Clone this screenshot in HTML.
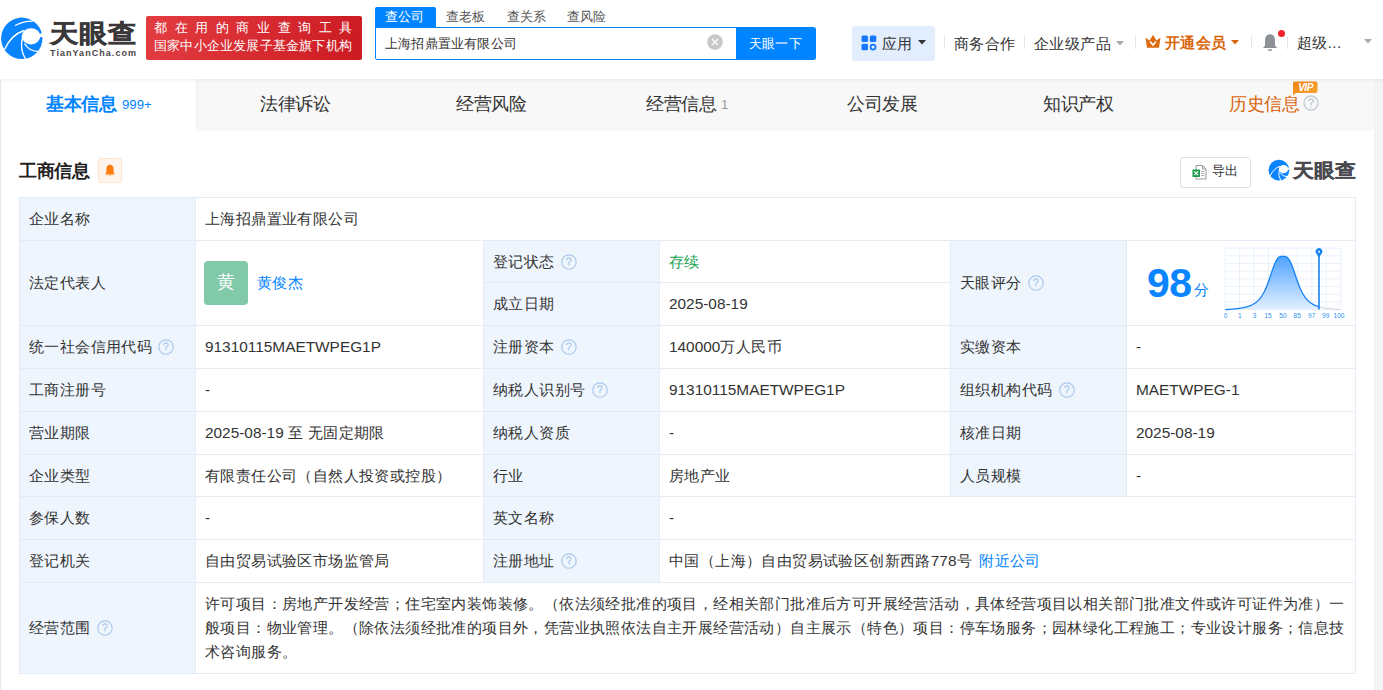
<!DOCTYPE html>
<html><head><meta charset="utf-8">
<style>
*{box-sizing:border-box;margin:0;padding:0}
html,body{width:1383px;height:690px;overflow:hidden}
body{background:#f4f4f4;font-family:"Liberation Sans",sans-serif;color:#333;position:relative}
.a{position:absolute;white-space:nowrap}
#hdr{position:absolute;left:0;top:0;width:1383px;height:79px;background:#fff;box-shadow:0 1px 4px rgba(0,0,0,0.07);z-index:5}
#wrap{position:absolute;left:1px;top:79px;width:1373px;height:611px;background:#fff}
#lstrip{position:absolute;left:0;top:79px;width:1px;height:611px;background:#e8e8e8}
.tabbar{position:absolute;left:0;top:0;width:1373px;height:52px;background:#f8f8f8}
.tab{position:absolute;top:-1px;height:52px;line-height:52px;font-size:17.6px;color:#333;text-align:center}
.cn{letter-spacing:0.4px}
.hl{position:absolute;height:1px;background:#e3ecf5}
.vl{position:absolute;width:1px;background:#e3ecf5}
.lb{position:absolute;background:#eef5fd}
.t{position:absolute;white-space:nowrap;font-size:15.4px;color:#333}
.q{display:inline-block;width:16px;height:16px;vertical-align:middle;margin-left:2px;position:relative;top:-1px}
</style></head><body>
<div id="hdr">
  <svg class="a" style="left:0;top:14px" width="48" height="48" viewBox="0 0 48 48">
    <circle cx="21.8" cy="24.3" r="20.7" fill="#0a84ff"/>
    <ellipse cx="31" cy="22.3" rx="9.3" ry="8.1" fill="#fff"/>
    <path d="M31 22 L45 18.5 L45 23.5 Z" fill="#fff"/>
    <path d="M37.5 20.5 Q38.5 12 30 10.5 Q23 9.5 17 13.5" fill="none" stroke="#0a84ff" stroke-width="0"/>
    <path d="M4.5 35.5 Q11 21 24 16.5" fill="none" stroke="#fff" stroke-width="1.4"/>
    <path d="M22.5 24 Q19.5 35 25.5 45" fill="none" stroke="#fff" stroke-width="1.4"/>
    <path d="M24.5 29.5 Q29 37.5 39 37.5" fill="none" stroke="#fff" stroke-width="1.4"/>
    <path d="M15 11.5 Q24 7 33 7.2" fill="none" stroke="#fff" stroke-width="1.2"/>
  </svg>
  <div class="a" style="left:49.5px;top:17px;font-size:25px;line-height:32px;font-weight:bold;color:#3b3839;letter-spacing:0.6px;transform:scaleX(1.13);transform-origin:0 0;-webkit-text-stroke:0.5px #3b3839">天眼查</div>
  <div class="a" style="left:50px;top:47px;font-size:9px;line-height:12px;font-weight:bold;color:#4a4647;letter-spacing:1.05px">TianYanCha.com</div>
  <div class="a" style="left:146px;top:16px;width:216px;height:44px;border-radius:2px;background:linear-gradient(100deg,#e23c41,#cc1b22)"></div>
  <div class="a" style="left:154px;top:18px;font-size:13px;line-height:20px;color:#fff;letter-spacing:7.6px">都在用的商业查询工具</div>
  <div class="a" style="left:154px;top:36px;font-size:13px;line-height:20px;color:#fff;letter-spacing:0.2px">国家中小企业发展子基金旗下机构</div>

  <div class="a" style="left:375px;top:7px;width:61px;height:21px;background:#0084ff;border-radius:2px 2px 0 0"></div>
  <div class="a" style="left:385px;top:6px;font-size:13px;line-height:21px;color:#fff;letter-spacing:0.2px">查公司</div>
  <div class="a" style="left:446px;top:6px;font-size:13px;line-height:21px;color:#555;letter-spacing:0.2px">查老板</div>
  <div class="a" style="left:507px;top:6px;font-size:13px;line-height:21px;color:#555;letter-spacing:0.2px">查关系</div>
  <div class="a" style="left:567px;top:6px;font-size:13px;line-height:21px;color:#555;letter-spacing:0.2px">查风险</div>
  <div class="a" style="left:375px;top:27px;width:441px;height:33px;border:1px solid #0084ff;border-radius:0 2px 2px 2px;background:#fff"></div>
  <div class="a" style="left:385px;top:27px;font-size:13px;line-height:33px;color:#333;letter-spacing:0.2px">上海招鼎置业有限公司</div>
  <svg class="a" style="left:707px;top:34px" width="16" height="16" viewBox="0 0 16 16"><circle cx="8" cy="8" r="7.8" fill="#c8c8c8"/><path d="M5 5L11 11M11 5L5 11" stroke="#fff" stroke-width="1.3"/></svg>
  <div class="a" style="left:736px;top:27px;width:79px;height:33px;background:#0084ff;border-radius:0 3px 3px 0"></div>
  <div class="a" style="left:749px;top:27px;font-size:13px;line-height:33px;color:#fff;letter-spacing:0.2px">天眼一下</div>

  <div class="a" style="left:852px;top:26px;width:83px;height:35px;background:#e2eefe;border-radius:3px"></div>
  <svg class="a" style="left:861px;top:35px" width="16" height="16" viewBox="0 0 16 16">
    <rect x="0.5" y="0.5" width="6.5" height="6.5" rx="1.5" fill="#1677ff"/>
    <rect x="8.8" y="0.5" width="6.5" height="6.5" rx="1.5" fill="#1677ff"/>
    <rect x="0.5" y="8.8" width="6.5" height="6.5" rx="1.5" fill="#1677ff"/>
    <circle cx="12.05" cy="12.05" r="2.5" fill="none" stroke="#1677ff" stroke-width="1.8"/>
  </svg>
  <div class="a" style="left:882px;top:26px;font-size:15px;line-height:35px;color:#333;letter-spacing:0.4px">应用</div>
  <svg class="a" style="left:918px;top:40px" width="8" height="5" viewBox="0 0 8 5"><path d="M0 0H8L4 4.5Z" fill="#333"/></svg>
  <div class="a" style="left:944px;top:36px;width:1px;height:13px;background:#e6e6e6"></div>
  <div class="a" style="left:954px;top:26px;font-size:15px;line-height:35px;color:#333;letter-spacing:0.4px">商务合作</div>
  <div class="a" style="left:1024px;top:36px;width:1px;height:13px;background:#e6e6e6"></div>
  <div class="a" style="left:1034px;top:26px;font-size:15px;line-height:35px;color:#333;letter-spacing:0.4px">企业级产品</div>
  <svg class="a" style="left:1116px;top:41px" width="8" height="5" viewBox="0 0 8 5"><path d="M0 0H8L4 4.5Z" fill="#aaa"/></svg>
  <div class="a" style="left:1135px;top:36px;width:1px;height:13px;background:#e6e6e6"></div>
  <svg class="a" style="left:1145px;top:34px" width="16" height="15" viewBox="0 0 16 15">
    <path d="M0.5 3.5 L4.5 6.5 L8 0.8 L11.5 6.5 L15.5 3.5 L14 13.8 H2 Z" fill="#dc6a0f"/>
    <path d="M5 7.5 L8 11 L11 7.5" fill="none" stroke="#fff" stroke-width="1.6"/>
  </svg>
  <div class="a" style="left:1165px;top:25px;font-size:15px;line-height:35px;color:#d9650b;font-weight:bold;letter-spacing:0.4px">开通会员</div>
  <svg class="a" style="left:1231px;top:40px" width="8" height="5" viewBox="0 0 8 5"><path d="M0 0H8L4 4.5Z" fill="#d9650b"/></svg>
  <div class="a" style="left:1251px;top:36px;width:1px;height:13px;background:#e6e6e6"></div>
  <svg class="a" style="left:1262px;top:33px" width="16" height="19" viewBox="0 0 16 19">
    <path d="M8 1.2 C4.2 1.2 3 4.5 3 8 V12.5 L1 15 H15 L13 12.5 V8 C13 4.5 11.8 1.2 8 1.2Z" fill="#8e9196"/>
    <path d="M6 17 H10" stroke="#8e9196" stroke-width="1.4"/>
  </svg>
  <div class="a" style="left:1278px;top:30px;width:7px;height:7px;border-radius:50%;background:#f5222d"></div>
  <div class="a" style="left:1287px;top:36px;width:1px;height:13px;background:#e6e6e6"></div>
  <div class="a" style="left:1297px;top:24.5px;font-size:15px;line-height:35px;color:#333;letter-spacing:0.4px">超级...</div>
  <svg class="a" style="left:1364px;top:39px" width="8" height="5" viewBox="0 0 8 5"><path d="M0 0H8L4 4.5Z" fill="#aaa"/></svg>
</div>
<div id="lstrip"></div>
<div id="wrap">
  <div class="tabbar"></div>
  <div class="a" style="left:0;top:0;width:195px;height:52px;background:#fff"></div>
  <div class="a" style="left:195px;top:0;width:1px;height:52px;background:#efefef"></div>
  <div class="a" style="left:45px;top:-1px;line-height:52px;font-size:18px;font-weight:bold;color:#0084ff;letter-spacing:-0.4px">基本信息</div>
  <div class="a" style="left:121px;top:1px;line-height:50px;font-size:13.2px;color:#0084ff">999+</div>
  <div class="a tab" style="left:259px;letter-spacing:-0.4px;font-size:18px">法律诉讼</div>
  <div class="a tab" style="left:455px;letter-spacing:-0.4px;font-size:18px">经营风险</div>
  <div class="a tab" style="left:645px;letter-spacing:-0.4px;font-size:18px">经营信息</div>
  <div class="a" style="left:720px;top:1px;line-height:50px;font-size:13.2px;color:#999">1</div>
  <div class="a tab" style="left:846px;letter-spacing:-0.4px;font-size:18px">公司发展</div>
  <div class="a tab" style="left:1042px;letter-spacing:-0.4px;font-size:18px">知识产权</div>
  <div class="a tab" style="left:1228px;letter-spacing:-0.4px;font-size:18px;color:#d9650b">历史信息</div>
  <svg class="a" style="left:1302px;top:16px" width="16" height="16" viewBox="0 0 16 16"><circle cx="8" cy="8" r="7" fill="none" stroke="#c4cbd3" stroke-width="1.3"/><path d="M5.8 6.2 Q5.8 4 8 4 Q10.2 4 10.2 6 Q10.2 7.4 8 8.3 V10.6" fill="none" stroke="#c4cbd3" stroke-width="1.3"/><circle cx="8" cy="12.3" r="0.7" fill="#c4cbd3"/></svg>
  <svg class="a" style="left:1291px;top:2px" width="26" height="15" viewBox="0 0 26 15"><defs><linearGradient id="vg" x1="0" y1="0" x2="1" y2="1"><stop offset="0" stop-color="#ef8413"/><stop offset="1" stop-color="#f7a637"/></linearGradient></defs><path d="M3 0.5 H23.5 Q25.5 0.5 25.5 2.5 V10 Q25.5 12 23.5 12 H4 L1 14.5 V2.5 Q1 0.5 3 0.5Z" fill="url(#vg)"/><text x="13.5" y="10" text-anchor="middle" font-size="10" font-weight="bold" font-style="italic" fill="#fff" font-family="Liberation Sans, sans-serif" letter-spacing="-0.5">VIP</text></svg>
</div>
<!--SEC-->
<div class="a" style="left:19px;top:159px;font-size:18px;line-height:24px;font-weight:bold;color:#222;letter-spacing:-0.4px">工商信息</div>
<div class="a" style="left:98px;top:158px;width:24px;height:25px;border:1px solid #ffe3cc;background:#fff4eb;border-radius:3px"></div>
<svg class="a" style="left:104px;top:164px" width="12" height="13" viewBox="0 0 12 13"><path d="M6 0.8 C3.3 0.8 2.4 3 2.4 5.5 V8.6 L1 10.4 H11 L9.6 8.6 V5.5 C9.6 3 8.7 0.8 6 0.8Z" fill="#ff7b0d"/><path d="M4.6 11.4 Q6 12.9 7.4 11.4Z" fill="#ff7b0d"/></svg>
<div class="a" style="left:1180px;top:157px;width:71px;height:31px;border:1px solid #e0e0e0;border-radius:3px;background:#fff"></div>
<svg class="a" style="left:1192px;top:164px" width="16" height="16" viewBox="0 0 16 16">
 <path d="M4 1.5 H10.5 L14 5 V15 H4 Z" fill="#fff" stroke="#9a9a9a" stroke-width="1"/>
 <path d="M10.5 1.5 V5 H14" fill="none" stroke="#9a9a9a" stroke-width="1"/>
 <path d="M9 7.5 H12.5 M9 9.5 H12.5 M9 11.5 H12.5" stroke="#b5b5b5" stroke-width="1"/>
 <rect x="0.5" y="5.5" width="7.5" height="7.5" fill="#1d9a4b"/>
 <path d="M2.3 7.3 L6.2 11.2 M6.2 7.3 L2.3 11.2" stroke="#fff" stroke-width="1.2"/>
</svg>
<div class="a" style="left:1212px;top:156px;font-size:13px;line-height:30px;color:#333;letter-spacing:0.2px">导出</div>
<svg class="a" style="left:1268px;top:158px" width="24" height="24" viewBox="0 0 48 48">
  <circle cx="21.8" cy="24.3" r="20.7" fill="#0a84ff"/>
  <ellipse cx="31" cy="22.3" rx="9.3" ry="8.1" fill="#fff"/>
  <path d="M31 22 L45 18.5 L45 23.5 Z" fill="#fff"/>
  <path d="M4.5 35.5 Q11 21 24 16.5" fill="none" stroke="#fff" stroke-width="2"/>
  <path d="M22.5 24 Q19.5 35 25.5 45" fill="none" stroke="#fff" stroke-width="2"/>
  <path d="M24.5 29.5 Q29 37.5 39 37.5" fill="none" stroke="#fff" stroke-width="2"/>
</svg>
<div class="a" style="left:1292.5px;top:157px;font-size:19px;line-height:28px;font-weight:bold;color:#4a4a50;letter-spacing:0.3px;transform:scaleX(1.1);transform-origin:0 0;-webkit-text-stroke:0.3px #4a4a50">天眼查</div>
<!--/SEC-->
<!--TABLE-->
<div class="a" style="left:19px;top:197px;width:176px;height:476px;background:#eef5fd"></div>
<div class="a" style="left:483px;top:240px;width:176px;height:342px;background:#eef5fd"></div>
<div class="a" style="left:950px;top:240px;width:176px;height:256px;background:#eef5fd"></div>
<div class="a" style="left:19px;top:197px;width:1337px;height:1px;background:#e3ecf5"></div>
<div class="a" style="left:19px;top:240px;width:1337px;height:1px;background:#e3ecf5"></div>
<div class="a" style="left:19px;top:325px;width:1337px;height:1px;background:#e3ecf5"></div>
<div class="a" style="left:19px;top:368px;width:1337px;height:1px;background:#e3ecf5"></div>
<div class="a" style="left:19px;top:411px;width:1337px;height:1px;background:#e3ecf5"></div>
<div class="a" style="left:19px;top:454px;width:1337px;height:1px;background:#e3ecf5"></div>
<div class="a" style="left:19px;top:496px;width:1337px;height:1px;background:#e3ecf5"></div>
<div class="a" style="left:19px;top:539px;width:1337px;height:1px;background:#e3ecf5"></div>
<div class="a" style="left:19px;top:582px;width:1337px;height:1px;background:#e3ecf5"></div>
<div class="a" style="left:19px;top:673px;width:1337px;height:1px;background:#e3ecf5"></div>
<div class="a" style="left:483px;top:282px;width:467px;height:1px;background:#e3ecf5"></div>
<div class="a" style="left:19px;top:197px;width:1px;height:477px;background:#e3ecf5"></div>
<div class="a" style="left:195px;top:197px;width:1px;height:477px;background:#e3ecf5"></div>
<div class="a" style="left:483px;top:240px;width:1px;height:342px;background:#e3ecf5"></div>
<div class="a" style="left:659px;top:240px;width:1px;height:342px;background:#e3ecf5"></div>
<div class="a" style="left:950px;top:240px;width:1px;height:256px;background:#e3ecf5"></div>
<div class="a" style="left:1126px;top:240px;width:1px;height:256px;background:#e3ecf5"></div>
<div class="a" style="left:1355px;top:197px;width:1px;height:477px;background:#e3ecf5"></div>
<div class="t" style="left:29px;top:198px;height:42px;line-height:42px;"><span class="cn">企业名称</span></div>
<div class="t" style="left:205px;top:198px;height:42px;line-height:42px;"><span class="cn">上海招鼎置业有限公司</span></div>
<div class="t" style="left:29px;top:326px;height:42px;line-height:42px;"><span class="cn">统一社会信用代码</span> <svg class="q" viewBox="0 0 16 16"><circle cx="8" cy="8" r="7.2" fill="none" stroke="#a9c8eb" stroke-width="1.15"/><path d="M5.9 6.1 Q5.9 3.9 8 3.9 Q10.1 3.9 10.1 5.9 Q10.1 7.3 8 8.2 V11.2" fill="none" stroke="#a9c8eb" stroke-width="1.15"/></svg></div>
<div class="t" style="left:205px;top:326px;height:42px;line-height:42px;">91310115MAETWPEG1P</div>
<div class="t" style="left:493px;top:326px;height:42px;line-height:42px;"><span class="cn">注册资本</span> <svg class="q" viewBox="0 0 16 16"><circle cx="8" cy="8" r="7.2" fill="none" stroke="#a9c8eb" stroke-width="1.15"/><path d="M5.9 6.1 Q5.9 3.9 8 3.9 Q10.1 3.9 10.1 5.9 Q10.1 7.3 8 8.2 V11.2" fill="none" stroke="#a9c8eb" stroke-width="1.15"/></svg></div>
<div class="t" style="left:669px;top:326px;height:42px;line-height:42px;">140000<span class="cn">万人民币</span></div>
<div class="t" style="left:960px;top:326px;height:42px;line-height:42px;"><span class="cn">实缴资本</span></div>
<div class="t" style="left:1136px;top:326px;height:42px;line-height:42px;">-</div>
<div class="t" style="left:29px;top:369px;height:42px;line-height:42px;"><span class="cn">工商注册号</span></div>
<div class="t" style="left:205px;top:369px;height:42px;line-height:42px;">-</div>
<div class="t" style="left:493px;top:369px;height:42px;line-height:42px;"><span class="cn">纳税人识别号</span> <svg class="q" viewBox="0 0 16 16"><circle cx="8" cy="8" r="7.2" fill="none" stroke="#a9c8eb" stroke-width="1.15"/><path d="M5.9 6.1 Q5.9 3.9 8 3.9 Q10.1 3.9 10.1 5.9 Q10.1 7.3 8 8.2 V11.2" fill="none" stroke="#a9c8eb" stroke-width="1.15"/></svg></div>
<div class="t" style="left:669px;top:369px;height:42px;line-height:42px;">91310115MAETWPEG1P</div>
<div class="t" style="left:960px;top:369px;height:42px;line-height:42px;"><span class="cn">组织机构代码</span> <svg class="q" viewBox="0 0 16 16"><circle cx="8" cy="8" r="7.2" fill="none" stroke="#a9c8eb" stroke-width="1.15"/><path d="M5.9 6.1 Q5.9 3.9 8 3.9 Q10.1 3.9 10.1 5.9 Q10.1 7.3 8 8.2 V11.2" fill="none" stroke="#a9c8eb" stroke-width="1.15"/></svg></div>
<div class="t" style="left:1136px;top:369px;height:42px;line-height:42px;">MAETWPEG-1</div>
<div class="t" style="left:29px;top:412px;height:42px;line-height:42px;"><span class="cn">营业期限</span></div>
<div class="t" style="left:205px;top:412px;height:42px;line-height:42px;">2025-08-19 <span class="cn">至</span> <span class="cn">无固定期限</span></div>
<div class="t" style="left:493px;top:412px;height:42px;line-height:42px;"><span class="cn">纳税人资质</span></div>
<div class="t" style="left:669px;top:412px;height:42px;line-height:42px;">-</div>
<div class="t" style="left:960px;top:412px;height:42px;line-height:42px;"><span class="cn">核准日期</span></div>
<div class="t" style="left:1136px;top:412px;height:42px;line-height:42px;">2025-08-19</div>
<div class="t" style="left:29px;top:455px;height:41px;line-height:41px;"><span class="cn">企业类型</span></div>
<div class="t" style="left:205px;top:455px;height:41px;line-height:41px;"><span class="cn">有限责任公司（自然人投资或控股）</span></div>
<div class="t" style="left:493px;top:455px;height:41px;line-height:41px;"><span class="cn">行业</span></div>
<div class="t" style="left:669px;top:455px;height:41px;line-height:41px;"><span class="cn">房地产业</span></div>
<div class="t" style="left:960px;top:455px;height:41px;line-height:41px;"><span class="cn">人员规模</span></div>
<div class="t" style="left:1136px;top:455px;height:41px;line-height:41px;">-</div>
<div class="t" style="left:29px;top:497px;height:42px;line-height:42px;"><span class="cn">参保人数</span></div>
<div class="t" style="left:205px;top:497px;height:42px;line-height:42px;">-</div>
<div class="t" style="left:493px;top:497px;height:42px;line-height:42px;"><span class="cn">英文名称</span></div>
<div class="t" style="left:669px;top:497px;height:42px;line-height:42px;">-</div>
<div class="t" style="left:29px;top:540px;height:42px;line-height:42px;"><span class="cn">登记机关</span></div>
<div class="t" style="left:205px;top:540px;height:42px;line-height:42px;"><span class="cn">自由贸易试验区市场监管局</span></div>
<div class="t" style="left:493px;top:540px;height:42px;line-height:42px;"><span class="cn">注册地址</span> <svg class="q" viewBox="0 0 16 16"><circle cx="8" cy="8" r="7.2" fill="none" stroke="#a9c8eb" stroke-width="1.15"/><path d="M5.9 6.1 Q5.9 3.9 8 3.9 Q10.1 3.9 10.1 5.9 Q10.1 7.3 8 8.2 V11.2" fill="none" stroke="#a9c8eb" stroke-width="1.15"/></svg></div>
<div class="t" style="left:669px;top:540px;height:42px;line-height:42px;"><span class="cn">中国（上海）自由贸易试验区创新西路</span>778<span class="cn">号</span> <span style="color:#0084ff;margin-left:3px"><span class="cn">附近公司</span></span></div>
<div class="t" style="left:29px;top:241px;height:84px;line-height:84px;"><span class="cn">法定代表人</span></div>
<div class="a" style="left:204px;top:261px;width:44px;height:44px;border-radius:4px;background:#82c9aa;color:#fff;font-size:18px;line-height:42px;text-align:center">黄</div>
<div class="t" style="left:257px;top:241px;height:84px;line-height:84px;color:#0084ff"><span class="cn">黄俊杰</span></div>
<div class="t" style="left:493px;top:241px;height:41px;line-height:41px;"><span class="cn">登记状态</span> <svg class="q" viewBox="0 0 16 16"><circle cx="8" cy="8" r="7.2" fill="none" stroke="#a9c8eb" stroke-width="1.15"/><path d="M5.9 6.1 Q5.9 3.9 8 3.9 Q10.1 3.9 10.1 5.9 Q10.1 7.3 8 8.2 V11.2" fill="none" stroke="#a9c8eb" stroke-width="1.15"/></svg></div>
<div class="t" style="left:669px;top:241px;height:41px;line-height:41px;color:#1aa356"><span class="cn">存续</span></div>
<div class="t" style="left:493px;top:283px;height:42px;line-height:42px;"><span class="cn">成立日期</span></div>
<div class="t" style="left:669px;top:283px;height:42px;line-height:42px;">2025-08-19</div>
<div class="t" style="left:960px;top:241px;height:84px;line-height:84px;"><span class="cn">天眼评分</span> <svg class="q" viewBox="0 0 16 16"><circle cx="8" cy="8" r="7.2" fill="none" stroke="#a9c8eb" stroke-width="1.15"/><path d="M5.9 6.1 Q5.9 3.9 8 3.9 Q10.1 3.9 10.1 5.9 Q10.1 7.3 8 8.2 V11.2" fill="none" stroke="#a9c8eb" stroke-width="1.15"/></svg></div>
<div class="t" style="left:29px;top:583px;height:90px;line-height:90px;"><span class="cn">经营范围</span> <svg class="q" viewBox="0 0 16 16"><circle cx="8" cy="8" r="7.2" fill="none" stroke="#a9c8eb" stroke-width="1.15"/><path d="M5.9 6.1 Q5.9 3.9 8 3.9 Q10.1 3.9 10.1 5.9 Q10.1 7.3 8 8.2 V11.2" fill="none" stroke="#a9c8eb" stroke-width="1.15"/></svg></div>
<div class="t cn" style="left:205px;top:592px;line-height:24px">许可项目：房地产开发经营；住宅室内装饰装修。（依法须经批准的项目，经相关部门批准后方可开展经营活动，具体经营项目以相关部门批准文件或许可证件为准）一<br>般项目：物业管理。（除依法须经批准的项目外，凭营业执照依法自主开展经营活动）自主展示（特色）项目：停车场服务；园林绿化工程施工；专业设计服务；信息技<br>术咨询服务。</div>
<!--CHART-->
<svg class="a" style="left:1222px;top:244px" width="126" height="78" viewBox="0 0 126 78">
<defs><linearGradient id="gf" x1="0" y1="0" x2="0" y2="1"><stop offset="0" stop-color="#4fa3ff"/><stop offset="1" stop-color="#e3f0ff"/></linearGradient></defs>
<path d="M3.20 4.10V65.60" stroke="#e9f1fb" stroke-width="1"/><path d="M17.64 4.10V65.60" stroke="#e9f1fb" stroke-width="1"/><path d="M32.08 4.10V65.60" stroke="#e9f1fb" stroke-width="1"/><path d="M46.51 4.10V65.60" stroke="#e9f1fb" stroke-width="1"/><path d="M60.95 4.10V65.60" stroke="#e9f1fb" stroke-width="1"/><path d="M75.39 4.10V65.60" stroke="#e9f1fb" stroke-width="1"/><path d="M89.83 4.10V65.60" stroke="#e9f1fb" stroke-width="1"/><path d="M104.26 4.10V65.60" stroke="#e9f1fb" stroke-width="1"/><path d="M118.70 4.10V65.60" stroke="#e9f1fb" stroke-width="1"/><path d="M3.20 4.10H118.70" stroke="#e9f1fb" stroke-width="1"/><path d="M3.20 11.79H118.70" stroke="#e9f1fb" stroke-width="1"/><path d="M3.20 19.48H118.70" stroke="#e9f1fb" stroke-width="1"/><path d="M3.20 27.16H118.70" stroke="#e9f1fb" stroke-width="1"/><path d="M3.20 34.85H118.70" stroke="#e9f1fb" stroke-width="1"/><path d="M3.20 42.54H118.70" stroke="#e9f1fb" stroke-width="1"/><path d="M3.20 50.23H118.70" stroke="#e9f1fb" stroke-width="1"/><path d="M3.20 57.91H118.70" stroke="#e9f1fb" stroke-width="1"/><path d="M3.20 65.60H118.70" stroke="#e9f1fb" stroke-width="1"/>
<path d="M3.20 65.59 L3.70 65.57 L4.20 65.54 L4.70 65.51 L5.20 65.48 L5.70 65.46 L6.20 65.43 L6.70 65.39 L7.20 65.36 L7.70 65.33 L8.20 65.30 L8.70 65.26 L9.20 65.22 L9.70 65.18 L10.20 65.14 L10.70 65.10 L11.20 65.06 L11.70 65.01 L12.20 64.97 L12.70 64.92 L13.20 64.87 L13.70 64.82 L14.20 64.76 L14.70 64.71 L15.20 64.65 L15.70 64.58 L16.20 64.52 L16.70 64.45 L17.20 64.38 L17.70 64.31 L18.20 64.23 L18.70 64.15 L19.20 64.07 L19.70 63.98 L20.20 63.89 L20.70 63.80 L21.20 63.70 L21.70 63.59 L22.20 63.48 L22.70 63.37 L23.20 63.25 L23.70 63.12 L24.20 62.99 L24.70 62.85 L25.20 62.70 L25.70 62.55 L26.20 62.39 L26.70 62.22 L27.20 62.04 L27.70 61.85 L28.20 61.65 L28.70 61.44 L29.20 61.22 L29.70 60.98 L30.20 60.74 L30.70 60.48 L31.20 60.20 L31.70 59.91 L32.20 59.60 L32.70 59.28 L33.20 58.94 L33.70 58.57 L34.20 58.19 L34.70 57.78 L35.20 57.35 L35.70 56.89 L36.20 56.40 L36.70 55.89 L37.20 55.35 L37.70 54.77 L38.20 54.16 L38.70 53.51 L39.20 52.82 L39.70 52.10 L40.20 51.33 L40.70 50.52 L41.20 49.66 L41.70 48.75 L42.20 47.80 L42.70 46.79 L43.20 45.74 L43.70 44.63 L44.20 43.47 L44.70 42.26 L45.20 41.00 L45.70 39.70 L46.20 38.34 L46.70 36.95 L47.20 35.52 L47.70 34.07 L48.20 32.59 L48.70 31.09 L49.20 29.59 L49.70 28.10 L50.20 26.62 L50.70 25.18 L51.20 23.77 L51.70 22.41 L52.20 21.12 L52.70 19.90 L53.20 18.76 L53.70 17.71 L54.20 16.76 L54.70 15.91 L55.20 15.16 L55.70 14.51 L56.20 13.96 L56.70 13.50 L57.20 13.13 L57.70 12.85 L58.20 12.64 L58.70 12.49 L59.20 12.39 L59.70 12.33 L60.20 12.31 L60.70 12.30 L61.20 12.30 L61.70 12.31 L62.20 12.33 L62.70 12.38 L63.20 12.46 L63.70 12.60 L64.20 12.80 L64.70 13.07 L65.20 13.42 L65.70 13.86 L66.20 14.39 L66.70 15.02 L67.20 15.75 L67.70 16.58 L68.20 17.51 L68.70 18.54 L69.20 19.66 L69.70 20.87 L70.20 22.15 L70.70 23.49 L71.20 24.89 L71.70 26.33 L72.20 27.80 L72.70 29.29 L73.20 30.79 L73.70 32.29 L74.20 33.77 L74.70 35.24 L75.20 36.67 L75.70 38.07 L76.20 39.43 L76.70 40.75 L77.20 42.01 L77.70 43.23 L78.20 44.40 L78.70 45.52 L79.20 46.59 L79.70 47.60 L80.20 48.57 L80.70 49.48 L81.20 50.35 L81.70 51.17 L82.20 51.95 L82.70 52.68 L83.20 53.38 L83.70 54.03 L84.20 54.65 L84.70 55.23 L85.20 55.78 L85.70 56.30 L86.20 56.80 L86.70 57.26 L87.20 57.70 L87.70 58.11 L88.20 58.50 L88.70 58.87 L89.20 59.21 L89.70 59.54 L90.20 59.85 L90.70 60.15 L91.20 60.42 L91.70 60.69 L92.20 60.94 L92.70 61.17 L93.20 61.40 L93.70 61.61 L94.20 61.81 L94.70 62.00 L95.20 62.18 L95.70 62.35 L96.20 62.52 L96.70 62.67 L97.00 65.60 L3.20 65.60 Z" fill="url(#gf)"/>
<path d="M3.20 65.59 L3.70 65.57 L4.20 65.54 L4.70 65.51 L5.20 65.48 L5.70 65.46 L6.20 65.43 L6.70 65.39 L7.20 65.36 L7.70 65.33 L8.20 65.30 L8.70 65.26 L9.20 65.22 L9.70 65.18 L10.20 65.14 L10.70 65.10 L11.20 65.06 L11.70 65.01 L12.20 64.97 L12.70 64.92 L13.20 64.87 L13.70 64.82 L14.20 64.76 L14.70 64.71 L15.20 64.65 L15.70 64.58 L16.20 64.52 L16.70 64.45 L17.20 64.38 L17.70 64.31 L18.20 64.23 L18.70 64.15 L19.20 64.07 L19.70 63.98 L20.20 63.89 L20.70 63.80 L21.20 63.70 L21.70 63.59 L22.20 63.48 L22.70 63.37 L23.20 63.25 L23.70 63.12 L24.20 62.99 L24.70 62.85 L25.20 62.70 L25.70 62.55 L26.20 62.39 L26.70 62.22 L27.20 62.04 L27.70 61.85 L28.20 61.65 L28.70 61.44 L29.20 61.22 L29.70 60.98 L30.20 60.74 L30.70 60.48 L31.20 60.20 L31.70 59.91 L32.20 59.60 L32.70 59.28 L33.20 58.94 L33.70 58.57 L34.20 58.19 L34.70 57.78 L35.20 57.35 L35.70 56.89 L36.20 56.40 L36.70 55.89 L37.20 55.35 L37.70 54.77 L38.20 54.16 L38.70 53.51 L39.20 52.82 L39.70 52.10 L40.20 51.33 L40.70 50.52 L41.20 49.66 L41.70 48.75 L42.20 47.80 L42.70 46.79 L43.20 45.74 L43.70 44.63 L44.20 43.47 L44.70 42.26 L45.20 41.00 L45.70 39.70 L46.20 38.34 L46.70 36.95 L47.20 35.52 L47.70 34.07 L48.20 32.59 L48.70 31.09 L49.20 29.59 L49.70 28.10 L50.20 26.62 L50.70 25.18 L51.20 23.77 L51.70 22.41 L52.20 21.12 L52.70 19.90 L53.20 18.76 L53.70 17.71 L54.20 16.76 L54.70 15.91 L55.20 15.16 L55.70 14.51 L56.20 13.96 L56.70 13.50 L57.20 13.13 L57.70 12.85 L58.20 12.64 L58.70 12.49 L59.20 12.39 L59.70 12.33 L60.20 12.31 L60.70 12.30 L61.20 12.30 L61.70 12.31 L62.20 12.33 L62.70 12.38 L63.20 12.46 L63.70 12.60 L64.20 12.80 L64.70 13.07 L65.20 13.42 L65.70 13.86 L66.20 14.39 L66.70 15.02 L67.20 15.75 L67.70 16.58 L68.20 17.51 L68.70 18.54 L69.20 19.66 L69.70 20.87 L70.20 22.15 L70.70 23.49 L71.20 24.89 L71.70 26.33 L72.20 27.80 L72.70 29.29 L73.20 30.79 L73.70 32.29 L74.20 33.77 L74.70 35.24 L75.20 36.67 L75.70 38.07 L76.20 39.43 L76.70 40.75 L77.20 42.01 L77.70 43.23 L78.20 44.40 L78.70 45.52 L79.20 46.59 L79.70 47.60 L80.20 48.57 L80.70 49.48 L81.20 50.35 L81.70 51.17 L82.20 51.95 L82.70 52.68 L83.20 53.38 L83.70 54.03 L84.20 54.65 L84.70 55.23 L85.20 55.78 L85.70 56.30 L86.20 56.80 L86.70 57.26 L87.20 57.70 L87.70 58.11 L88.20 58.50 L88.70 58.87 L89.20 59.21 L89.70 59.54 L90.20 59.85 L90.70 60.15 L91.20 60.42 L91.70 60.69 L92.20 60.94 L92.70 61.17 L93.20 61.40 L93.70 61.61 L94.20 61.81 L94.70 62.00 L95.20 62.18 L95.70 62.35 L96.20 62.52 L96.70 62.67" fill="none" stroke="#1683f5" stroke-width="1.3"/>
<path d="M97.00 62.76 L97.50 62.90 L98.00 63.04 L98.50 63.17 L99.00 63.30 L99.50 63.41 L100.00 63.53 L100.50 63.63 L101.00 63.74 L101.50 63.83 L102.00 63.93 L102.50 64.02 L103.00 64.10 L103.50 64.19 L104.00 64.26 L104.50 64.34 L105.00 64.41 L105.50 64.48 L106.00 64.55 L106.50 64.61 L107.00 64.67 L107.50 64.73 L108.00 64.78 L108.50 64.84 L109.00 64.89 L109.50 64.94 L110.00 64.99 L110.50 65.03 L111.00 65.08 L111.50 65.12 L112.00 65.16 L112.50 65.20 L113.00 65.24 L113.50 65.27 L114.00 65.31 L114.50 65.34 L115.00 65.38 L115.50 65.41 L116.00 65.44 L116.50 65.47 L117.00 65.50 L117.50 65.52 L118.00 65.55 L118.50 65.58" fill="none" stroke="#d3dae3" stroke-width="1.2"/>
<path d="M97 10V65.60000000000002" stroke="#1683f5" stroke-width="1.6"/>
<path d="M97 13.5 L94 9 A3.4 3.4 0 1 1 100 9 Z" fill="#1683f5"/>
<circle cx="97" cy="7.699999999999989" r="1" fill="#fff"/>
<text x="3.50" y="73.60" text-anchor="middle" font-size="6.5" fill="#2b8ff5" font-family="Liberation Sans, sans-serif">0</text><text x="17.80" y="73.60" text-anchor="middle" font-size="6.5" fill="#2b8ff5" font-family="Liberation Sans, sans-serif">1</text><text x="32.50" y="73.60" text-anchor="middle" font-size="6.5" fill="#2b8ff5" font-family="Liberation Sans, sans-serif">3</text><text x="46.00" y="73.60" text-anchor="middle" font-size="6.5" fill="#2b8ff5" font-family="Liberation Sans, sans-serif">15</text><text x="60.90" y="73.60" text-anchor="middle" font-size="6.5" fill="#2b8ff5" font-family="Liberation Sans, sans-serif">50</text><text x="75.20" y="73.60" text-anchor="middle" font-size="6.5" fill="#2b8ff5" font-family="Liberation Sans, sans-serif">85</text><text x="89.70" y="73.60" text-anchor="middle" font-size="6.5" fill="#2b8ff5" font-family="Liberation Sans, sans-serif">97</text><text x="103.70" y="73.60" text-anchor="middle" font-size="6.5" fill="#2b8ff5" font-family="Liberation Sans, sans-serif">99</text><text x="117.00" y="73.60" text-anchor="middle" font-size="6.5" fill="#2b8ff5" font-family="Liberation Sans, sans-serif">100</text>
</svg>
<div class="a" style="left:1147px;top:258.5px;font-size:41px;line-height:48px;font-weight:bold;color:#0a84ff;letter-spacing:-0.5px">98</div>
<div class="a" style="left:1194px;top:278px;font-size:15px;line-height:24px;color:#0a84ff">分</div>
<!--/CHART-->
<!--/TABLE-->
</body></html>
